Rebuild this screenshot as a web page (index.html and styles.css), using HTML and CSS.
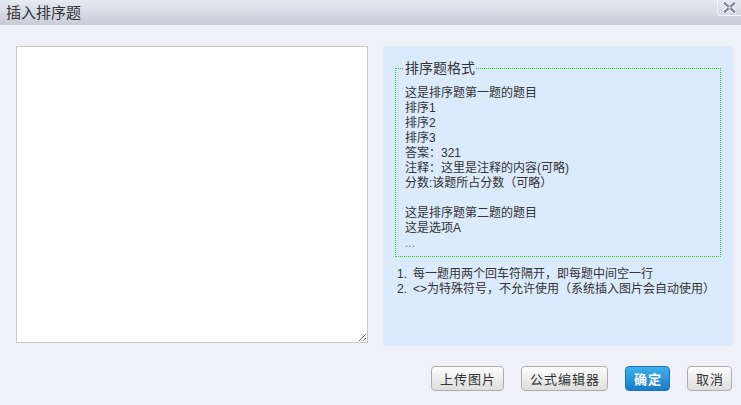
FILE: index.html
```html
<!DOCTYPE html>
<html>
<head>
<meta charset="utf-8">
<link rel="stylesheet" href="styles.css">
</head>
<body>
<div class="dialog">
  <div class="titlebar">
    <span class="title">插入排序题</span>
    <a class="close" title="关闭">
      <svg width="13" height="11" viewBox="0 0 13 11">
        <path d="M2 1.5 L11 9.5 M11 1.5 L2 9.5" stroke="#fff" stroke-width="4.4" stroke-linecap="square"/>
        <path d="M2 1.5 L11 9.5 M11 1.5 L2 9.5" stroke="#858ba6" stroke-width="2.6" stroke-linecap="square"/>
        <rect x="5.5" y="4.5" width="2" height="2" fill="#e8eaf2"/>
      </svg>
    </a>
  </div>
  <div class="content">
    <textarea class="editor"></textarea>
    <div class="help">
      <fieldset class="format">
        <legend>排序题格式</legend>
        <div class="sample">
          <div>这是排序题第一题的题目</div>
          <div>排序1</div>
          <div>排序2</div>
          <div>排序3</div>
          <div>答案：321</div>
          <div>注释：这里是注释的内容(可略)</div>
          <div>分数:该题所占分数（可略）</div>
          <div>&nbsp;</div>
          <div>这是排序题第二题的题目</div>
          <div>这是选项A</div>
          <div class="dots">...</div>
        </div>
      </fieldset>
      <div class="notes">
        <div class="note"><span class="num">1.</span><span>每一题用两个回车符隔开，即每题中间空一行</span></div>
        <div class="note"><span class="num">2.</span><span>&lt;&gt;为特殊符号，不允许使用（系统插入图片会自动使用）</span></div>
      </div>
    </div>
  </div>
  <div class="footer">
    <button class="btn">上传图片</button>
    <button class="btn">公式编辑器</button>
    <button class="btn primary">确定</button>
    <button class="btn">取消</button>
  </div>
</div>
</body>
</html>
```
FILE: styles.css
```css
html, body {
  margin: 0;
  padding: 0;
  background: #f0f0f9;
  font-family: "Liberation Sans", "Noto Sans CJK SC", sans-serif;
  color: #333;
}
.dialog {
  width: 741px;
  height: 405px;
  display: flex;
  flex-direction: column;
}
.titlebar {
  height: 25px;
  display: flex;
  align-items: flex-start;
  justify-content: space-between;
  background: linear-gradient(#e6e9f2, #c8ccd9);
  box-sizing: border-box;
}
.title {
  font-size: 15px;
  line-height: 25px;
  padding-left: 6px;
  color: #333;
}
.close {
  width: 24px;
  height: 16px;
  box-sizing: border-box;
  border-left: 1px solid #f4f5fa;
  border-bottom: 1px solid #f4f5fa;
  border-bottom-left-radius: 4px;
  display: flex;
  align-items: center;
  justify-content: center;
}
.close svg { display: block; }
.content {
  display: flex;
  padding: 21px 0 0 16px;
  gap: 15px;
}
.editor {
  width: 352px;
  height: 297px;
  box-sizing: border-box;
  border: 1px solid #c8c8c8;
  background: #fff;
  margin: 0;
  padding: 2px;
  resize: both;
  outline: none;
}
.help {
  width: 350px;
  height: 300px;
  box-sizing: border-box;
  background: #dbeafc;
  padding: 14px 12px 0 12px;
}
.format {
  margin: 0;
  border: 1px dotted #1fd81f;
  padding: 0 8px 5px 9px;
  width: 326px;
  box-sizing: border-box;
}
.format legend {
  font-size: 14px;
  line-height: 16px;
  padding: 0 1px;
  margin-left: -1px;
  color: #333;
}
.sample {
  padding-top: 10px;
  font-size: 12px;
  line-height: 15px;
}
.dots { color: #777; }
.notes {
  margin-top: 10px;
  font-size: 12px;
  line-height: 15px;
}
.note { display: flex; }
.num {
  width: 16px;
  margin-left: 2px;
  flex: none;
}
.footer {
  display: flex;
  justify-content: flex-end;
  gap: 17px;
  padding: 20px 9px 0 0;
}
.btn {
  height: 25px;
  padding: 0 7px 0 8px;
  font-family: "Liberation Sans", "Noto Sans CJK SC", sans-serif;
  font-size: 13px;
  letter-spacing: 1px;
  color: #333;
  border: 1px solid #adadad;
  border-radius: 4px;
  background: linear-gradient(#fdfdfd, #dedede);
  box-shadow: inset 0 1px 0 #fff;
  margin: 0;
}
.btn.primary {
  color: #fff;
  font-weight: bold;
  border-color: #1a73b8;
  background: linear-gradient(#3cb0ec, #1b7cc6);
  box-shadow: none;
}
```
